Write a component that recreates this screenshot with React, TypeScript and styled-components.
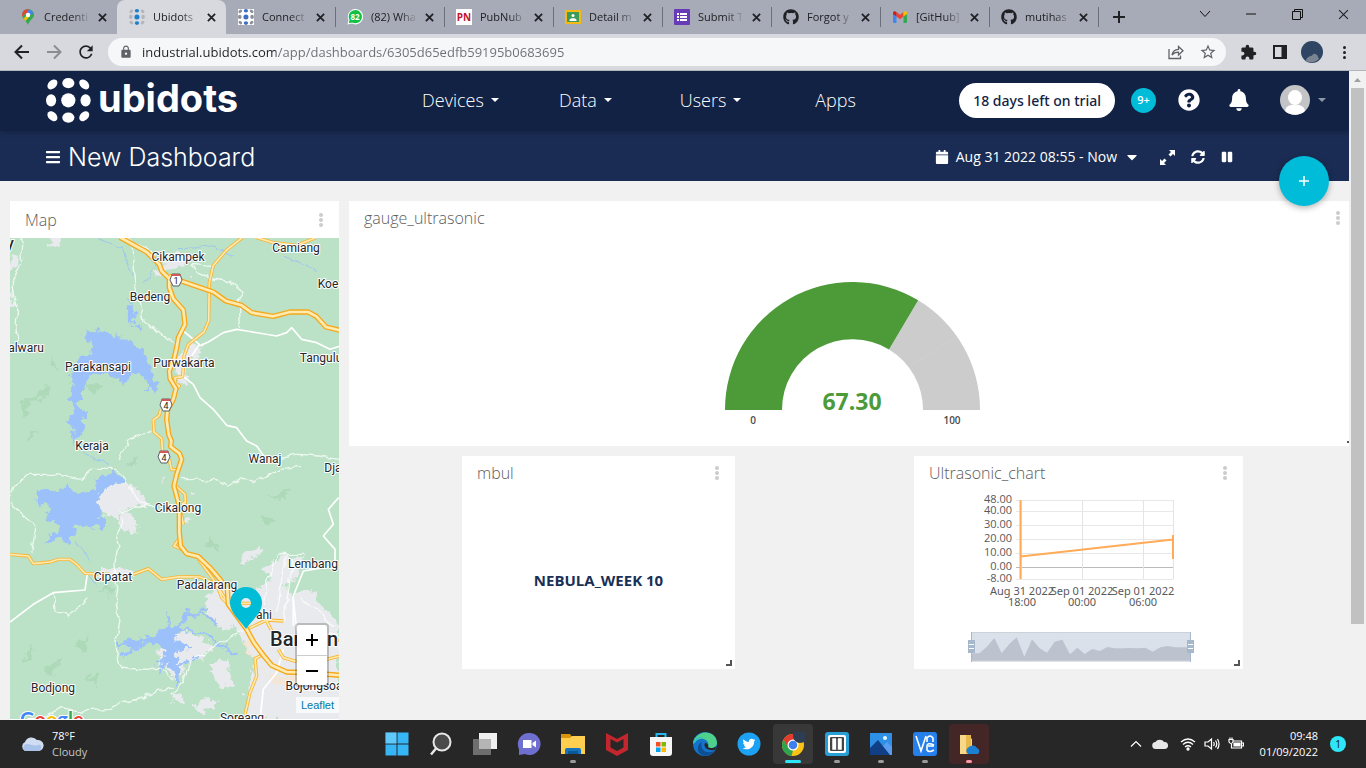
import React from "react";
import styled, { createGlobalStyle } from "styled-components";
import {
  FaBars, FaBell, FaCalendar, FaCaretDown, FaGithub, FaPause,
  FaQuestionCircle, FaSyncAlt, FaTwitter,
} from "react-icons/fa";
import { MdExtension, MdLock, MdRefresh, MdStarOutline } from "react-icons/md";

const sans = `"Open Sans", "Noto Sans", sans-serif`;

const GlobalStyle = createGlobalStyle`
  * { box-sizing: border-box; }
  body { margin: 0; font-family: ${sans}; }
  button { font: inherit; color: inherit; background: none; border: 0; padding: 0; cursor: pointer; }
  svg { display: block; flex: none; }
`;

const Shell = styled.div`
  display: flex;
  flex-direction: column;
  height: 100vh;
  overflow: hidden;
`;

/* ---------- browser ---------- */

const TabStrip = styled.div`
  display: flex;
  height: 34px;
  flex: none;
  padding-left: 8px;
  background: #a7abb7;
  color: #202124;
`;

const Tab = styled.div<{ $active?: boolean; $line?: boolean }>`
  position: relative;
  display: flex;
  align-items: center;
  gap: 8px;
  flex: 0 1 109px;
  min-width: 0;
  padding: 0 9px 0 12px;
  border-radius: 8px 8px 0 0;
  background: ${(p) => (p.$active ? "#d8d9de" : "transparent")};
  &::after {
    content: "";
    position: absolute;
    right: -1px;
    top: 7px;
    width: 1px;
    height: 20px;
    background: ${(p) => (p.$line ? "#6b6f79" : "transparent")};
  }
`;

const TabTitle = styled.button`
  flex: 1 1 0;
  min-width: 0;
  white-space: nowrap;
  text-align: left;
  font-size: 11px;
  line-height: 16px;
  mask-image: linear-gradient(90deg, #000 65%, rgba(0, 0, 0, 0.15));
`;

const FaviconTile = styled.span`
  background: #fff;
`;

const IconButton = styled.button<{ $w: number; $h?: number }>`
  display: flex;
  align-items: center;
  justify-content: center;
  flex: none;
  width: ${(p) => p.$w}px;
  height: ${(p) => p.$h ?? 28}px;
`;

const WindowControls = styled.div`
  display: flex;
  margin-left: auto;
`;

const Toolbar = styled.div`
  display: flex;
  align-items: center;
  flex: none;
  height: 37px;
  padding: 0 6px;
  background: #d8d9de;
  border-bottom: 1px solid #b3b6b8;
  color: #202124;
`;

const AddressBar = styled.div`
  display: flex;
  align-items: center;
  flex: 1;
  height: 28px;
  margin: 0 6px 0 6px;
  padding: 0 2px 0 11px;
  border-radius: 14px;
  background: #f5f7f9;
  color: #5f6368;
`;

const AddressInput = styled.input`
  flex: 1;
  min-width: 0;
  margin-left: 9px;
  padding: 0;
  border: 0;
  outline: 0;
  font-family: ${sans};
  font-size: 13px;
  line-height: 20px;
  color: transparent;
  background: linear-gradient(90deg, #202124 134px, #6b6e74 134px);
  background-clip: text;
  -webkit-background-clip: text;
`;

const Viewport = styled.div`
  display: flex;
  flex: 1;
  min-height: 0;
`;

const ScrollTrack = styled.div`
  display: flex;
  flex-direction: column;
  align-items: center;
  flex: none;
  width: 17px;
  background: #f1f1f1;
`;

const ScrollThumb = styled.div`
  width: 13px;
  height: calc(100% - 113px);
  background: #c1c1c1;
`;

/* ---------- Ubidots page ---------- */

const Page = styled.div`
  position: relative;
  flex: 1;
  min-width: 0;
  overflow: hidden;
  background: #f1f1f1;
`;

const Header = styled.header`
  position: relative;
  display: grid;
  grid-template-columns: minmax(200px, 352fr) 500px minmax(360px, 428fr);
  align-items: center;
  height: 60px;
  padding: 0 23px 2px 46px;
  background: #122244;
  color: #fff;
  box-shadow: 0 1px 5px rgba(0, 0, 0, 0.25);
`;

const Brand = styled.a`
  display: flex;
  align-items: flex-start;
  gap: 7px;
  color: #fff;
  text-decoration: none;
  font-size: 38px;
  line-height: 40px;
  font-weight: 700;
  font-family: Inter, ${sans};
`;

const Nav = styled.nav`
  display: grid;
  grid-template-columns: repeat(4, 1fr);
  justify-items: center;
`;

const NavItem = styled.button`
  display: flex;
  align-items: center;
  gap: 7px;
  font-size: 18px;
  line-height: 24px;
  font-weight: 300;
`;

const Account = styled.div`
  display: flex;
  align-items: center;
  justify-content: flex-end;
`;

const TrialButton = styled.button`
  height: 35px;
  padding: 0 14px;
  margin-right: 16px;
  border-radius: 18px;
  background: #fff;
  color: #122244;
  font-family: "Noto Sans", ${sans};
  font-size: 14px;
  font-weight: 500;
  white-space: nowrap;
`;

const CountBadge = styled.span`
  width: 25px;
  height: 25px;
  margin-right: 22px;
  border-radius: 50%;
  background: #00bcd9;
  text-align: center;
  font-size: 11px;
  line-height: 24px;
  font-weight: 600;
`;

const Alerts = styled.div`
  display: flex;
  align-items: center;
  gap: 28px;
  margin-right: 30px;
`;

const UserMenu = styled.button`
  display: flex;
  align-items: center;
  gap: 8px;
  color: #8f98aa;
`;

const SubHeader = styled.div`
  display: flex;
  align-items: center;
  justify-content: space-between;
  height: 50px;
  padding: 2px 116px 0 45px;
  background: #1a2c53;
  color: #fff;
`;

const Heading = styled.div`
  display: flex;
  align-items: center;
  gap: 7px;
`;

const PageTitle = styled.h1`
  margin: 0;
  font-family: Inter, ${sans};
  font-size: 25px;
  line-height: 32px;
  font-weight: 300;
`;

const TimeControls = styled.div`
  display: flex;
  align-items: center;
  gap: 16px;
`;

const RangeButton = styled.button`
  display: flex;
  align-items: center;
  gap: 7px;
  margin-right: 4px;
  font-size: 14px;
  line-height: 20px;
  font-weight: 500;
`;

const AddWidget = styled.button`
  position: absolute;
  right: 20px;
  top: 85px;
  z-index: 2;
  display: flex;
  align-items: center;
  justify-content: center;
  width: 50px;
  height: 50px;
  border-radius: 50%;
  background: #00bcd9;
  box-shadow: 0 2px 6px rgba(0, 0, 0, 0.3);
`;

/* The board is as wide as the window, so its last column runs under the scrollbar. */
const Board = styled.main`
  display: grid;
  width: calc(100% + 17px);
  grid-template-columns: repeat(12, minmax(0, 1fr));
  grid-template-rows: 245px 213px 50px;
  gap: 10px;
  padding: 20px 10px;
`;

const Widget = styled.section<{ $col: string; $row: string; $min?: number }>`
  position: relative;
  display: flex;
  flex-direction: column;
  grid-column: ${(p) => p.$col};
  grid-row: ${(p) => p.$row};
  min-width: ${(p) => p.$min ?? 0}px;
  background: #fff;
`;

const WidgetHead = styled.div<{ $tall?: boolean }>`
  display: flex;
  align-items: center;
  justify-content: space-between;
  flex: none;
  height: ${(p) => (p.$tall ? 37 : 34)}px;
  padding: 0 15px;
`;

const WidgetTitle = styled.h2`
  margin: 0;
  font-size: 16px;
  line-height: 22px;
  font-weight: 300;
  color: #5c5c5c;
`;

const WidgetBody = styled.div<{ $end?: boolean }>`
  display: flex;
  align-items: ${(p) => (p.$end ? "flex-end" : "center")};
  justify-content: center;
  flex: 1;
  min-height: 0;
`;

const ResizeCorner = styled.span`
  position: absolute;
  right: 3px;
  bottom: 3px;
  width: 6px;
  height: 6px;
  border: solid #555;
  border-width: 0 2px 2px 0;
`;

const Statement = styled.p`
  margin: 0;
  font-size: 15px;
  line-height: 20px;
  font-weight: 700;
  color: #1a3055;
`;

const MapBody = styled.div`
  position: relative;
  flex: none;
  height: 481px;
  overflow: hidden;
  background: #bbe2c6;
`;

const MapCorner = styled.div`
  position: absolute;
  right: 0;
  bottom: 6px;
  display: flex;
  flex-direction: column;
  align-items: flex-end;
  gap: 10px;
`;

const ZoomBox = styled.div`
  display: flex;
  flex-direction: column;
  margin-right: 10px;
  border: 2px solid rgba(0, 0, 0, 0.2);
  border-radius: 4px;
  background: #fff;
  background-clip: padding-box;
`;

const ZoomButton = styled.button`
  display: flex;
  align-items: center;
  justify-content: center;
  width: 30px;
  height: 30px;
  & + & { border-top: 1px solid #ccc; }
`;

const Attribution = styled.a`
  padding: 0 5px;
  background: rgba(255, 255, 255, 0.7);
  color: #0078a8;
  font-family: "Liberation Sans", sans-serif;
  font-size: 11px;
  line-height: 16px;
  text-decoration: none;
`;

/* ---------- taskbar ---------- */

const Taskbar = styled.footer`
  display: grid;
  grid-template-columns: 1fr auto 1fr;
  align-items: center;
  flex: none;
  height: 48px;
  padding: 0 20px;
  background: #272727;
  color: #fff;
  font-size: 11px;
  line-height: 16px;
`;

const Weather = styled.button`
  display: flex;
  align-items: center;
  gap: 8px;
  text-align: left;
`;

const Muted = styled.div`
  color: #c4c6c4;
`;

const Apps = styled.div`
  display: flex;
  gap: 4px;
`;

const AppButton = styled.button<{ $bg?: string; $mark?: string; $wide?: boolean }>`
  position: relative;
  display: flex;
  align-items: center;
  justify-content: center;
  width: 40px;
  height: 40px;
  border-radius: 4px;
  background: ${(p) => p.$bg ?? "transparent"};
  &::after {
    content: "";
    position: absolute;
    bottom: 1px;
    width: ${(p) => (p.$wide ? 16 : 6)}px;
    height: 3px;
    border-radius: 2px;
    background: ${(p) => p.$mark ?? "transparent"};
  }
`;

const Tray = styled.div`
  display: flex;
  align-items: center;
  justify-content: flex-end;
  gap: 8px;
`;

const Overflow = styled.div`
  display: flex;
  gap: 8px;
  margin-right: 4px;
`;

const Clock = styled.div`
  margin-left: 8px;
  margin-right: 4px;
  text-align: right;
`;

const NoticeCount = styled.span`
  width: 16px;
  height: 16px;
  border-radius: 50%;
  background: #2ee6f5;
  color: #111;
  text-align: center;
  font-size: 10px;
  line-height: 16px;
`;

/* ---------- drawings ---------- */

const Cross = ({ size = 9, w = 2 }: { size?: number; w?: number }) => (
  <svg width={size} height={size} viewBox="0 0 10 10" stroke="currentColor" strokeWidth={w}>
    <path d="M1 1 9 9M9 1 1 9" />
  </svg>
);

const DotsLogo = ({ size, a = "#fff", b = "#fff" }: { size: number; a?: string; b?: string }) => (
  <svg width={size} height={size} viewBox="0 0 133 133" fill={b}>
    <circle cx="66" cy="66" r="21" fill={a} />
    <ellipse cx="66" cy="15" rx="18" ry="15" fill={a} />
    <ellipse cx="66" cy="117" rx="18" ry="15" fill={a} />
    <ellipse cx="15" cy="66" rx="15" ry="18" />
    <ellipse cx="117" cy="66" rx="15" ry="18" />
    <ellipse cx="19" cy="19" rx="17" ry="12" transform="rotate(-45 19 19)" />
    <ellipse cx="113" cy="19" rx="17" ry="12" transform="rotate(45 113 19)" />
    <ellipse cx="19" cy="113" rx="17" ry="12" transform="rotate(45 19 113)" />
    <ellipse cx="113" cy="113" rx="17" ry="12" transform="rotate(-45 113 113)" />
  </svg>
);

const MapsIcon = () => (
  <svg width="16" height="16" viewBox="0 0 16 16">
    <path d="M2 6A6 6 0 0 1 14 6C14 9 9.500 11 8 16 6.500 12 2 9 2 6Z" fill="#34a853" />
    <path d="M2.200 7.500 10 1C5-1.500 1.500 3 2.200 7.500Z" fill="#ea4335" />
    <path d="M3.500 9.500 11 2.500 12 4 5.500 12Z" fill="#fbbc04" />
    <path d="M9 0.500A6 6 0 0 1 13.500 4L10 6 7 3Z" fill="#4285f4" />
    <circle cx="8" cy="6" r="2.200" fill="#fff" />
  </svg>
);

const WhatsIcon = () => (
  <svg width="16" height="16" viewBox="0 0 16 16">
    <path d="M.5 15.500 1.500 11A7.700 7.700 0 1 1 5 14.600Z" fill="#fff" />
    <path d="M1.800 14.300 2.600 11A6.600 6.600 0 1 1 5.200 13.500Z" fill="#12c143" />
    <text x="8" y="11" fontSize="8" fontWeight="700" fill="#fff" textAnchor="middle">82</text>
  </svg>
);

const PubNubIcon = () => (
  <svg width="16" height="16" viewBox="0 0 16 16">
    <path fill="#fff" d="M0 0H16V16H0Z" />
    <text x="8" y="12" fontSize="10" fontWeight="700" fill="#c3112d" textAnchor="middle">PN</text>
  </svg>
);

const ClassroomIcon = () => (
  <svg width="16" height="16" viewBox="0 0 16 16">
    <path fill="#f5ba15" d="M0 1H16V15H0Z" />
    <path fill="#3c9a5a" d="M2 3H14V13H2Z" />
    <circle cx="8" cy="6.500" r="1.500" fill="#fff" />
    <path d="M4.500 11C4.500 8.500 11.500 8.500 11.500 11V12H4.500Z" fill="#fff" />
  </svg>
);

const FormsIcon = () => (
  <svg width="16" height="16" viewBox="0 0 16 16">
    <rect width="16" height="16" rx="1" fill="#673ab7" />
    <path stroke="#fff" strokeWidth="2" d="M3 5H5M6 5H13M3 8H5M6 8H13M3 11H5M6 11H13" />
  </svg>
);

const GmailIcon = () => (
  <svg width="16" height="16" viewBox="0 0 16 16">
    <path fill="#4285f4" d="M1 4 4.500 6.500V14H2A1 1 0 0 1 1 13Z" />
    <path fill="#34a853" d="M15 4 11.500 6.500V14H14A1 1 0 0 0 15 13Z" />
    <path fill="#ea4335" d="M4.500 3 8 5.800 11.500 3V7.500L8 10.200 4.500 7.500Z" />
    <path fill="#c5221f" d="M1 4C1 2 3 1.700 4.500 3V7.500L1 5Z" />
    <path fill="#fbbc04" d="M15 4C15 2 13 1.700 11.500 3V7.500L15 5Z" />
  </svg>
);

const Arrow = ({ back }: { back?: boolean }) => (
  <svg width="16" height="16" viewBox="0 0 16 16" fill="none" stroke={back ? "#202124" : "#8b8d93"} strokeWidth="2">
    <path d={back ? "M15 8H2.500M8 1.500 1.500 8 8 14.500" : "M1 8H13.500M8 1.500 14.500 8 8 14.500"} />
  </svg>
);

const ShareIcon = () => (
  <svg width="16" height="16" viewBox="0 0 16 16" fill="none" stroke="#5f6368" strokeWidth="1.300">
    <path d="M1 5V14.500H12.500V11.500M4 11C4.500 7.500 7 5.500 10.500 5.300V2.500L15 6.700 10.500 11V8.200C8 8.200 5.500 9 4 11Z" />
  </svg>
);

const AvatarPhoto = () => (
  <svg width="22" height="22" viewBox="0 0 22 22">
    <circle cx="11" cy="11" r="11" fill="#2f4563" />
    <path d="M5 20C5 17 8 16 9 15 11 16 12 12 14 13 17 13 17 17 18 18A11 11 0 0 1 5 20Z" fill="#7b8591" />
  </svg>
);

const DotColumn = ({ color, r = 2, step = 5 }: { color: string; r?: number; step?: number }) => (
  <svg width={r * 2 + 2} height={step * 2 + r * 2} fill={color}>
    {[0, 1, 2].map((i) => <circle key={i} cx={r + 1} cy={r + i * step} r={r} />)}
  </svg>
);

const Caret = () => (
  <svg width="8" height="4" viewBox="0 0 8 4" fill="currentColor"><path d="M0 0H8L4 4Z" /></svg>
);

const ExpandIcon = () => (
  <svg width="15" height="15" viewBox="0 0 15 15" fill="#fff">
    <path d="M9 0H15V6L13 4 10.500 6.500 8.500 4.500 11 2ZM6 15H0V9L2 11 4.500 8.500 6.500 10.500 4 13Z" />
  </svg>
);

const UserPhoto = () => (
  <svg width="30" height="30" viewBox="0 0 30 30">
    <circle cx="15" cy="15" r="15" fill="#c3c4c6" />
    <ellipse cx="15" cy="12.500" rx="7" ry="7.500" fill="#fff" />
    <path d="M5 26C6 20 11 20 15 20 19 20 24 20 25 26A15 15 0 0 1 5 26Z" fill="#fff" />
  </svg>
);

const highway =
  "M360 124 440 168 478 205 485 225 508 248 508 275 520 308 550 342 555 385 535 425 530 455 522 490 508 525 510 548 528 578 520 610 503 640 500 670 506 715 514 735 512 752 538 772 545 790 530 835 522 870 538 930 538 1010 542 1050 560 1073 595 1082 630 1115 660 1150 682 1180 685 1225 740 1300 762 1340 790 1378 815 1408 860 1428 920 1430 1020 1438";
const highwayEast = "M508 240 528 250 640 288 678 315 725 328 755 350 820 361 870 348 925 348 950 362 978 393 1020 403";
const trunks = [
  "M728 124 680 162 640 208 628 260 626 375 612 408 565 445 552 480 548 542 525 545 525 562 538 570 528 582",
  "M768 124 820 140 890 148 945 126",
  "M482 640 478 658 460 672 462 708 485 728 488 770M508 790 514 820 528 822",
  "M528 870 555 895 556 920 540 925M540 935 550 985M535 1030 522 1050 545 1060",
  "M28 1075 85 1080 100 1103 150 1098 175 1090 210 1090 230 1105 255 1132 330 1135M400 1135 445 1118 485 1150 540 1142 600 1143 650 1165 665 1205 685 1225",
  "M595 1090 640 1150 680 1215 690 1170",
  "M722 1222H755M740 1300 800 1272 850 1275M800 1275 818 1310M835 1360 850 1385 890 1397M960 1395 1020 1380",
  "M795 1372 765 1388 770 1440 750 1490 735 1555",
];
const byways = [
  "M375 126 455 165 480 180M575 205 640 212M575 205 605 240 690 255 715 278 730 290 715 315 718 398",
  "M400 150 400 180 410 290 430 378 480 410 530 455",
  "M355 792 380 735 430 715 460 708M820 792 900 775 960 780 1020 790",
  "M66 126 62 205 35 250 50 330 45 400 52 440",
  "M160 1190 165 1245 210 1260 262 1205",
  "M30 900 40 875 75 835 160 835 240 850 275 820 350 820 375 850",
  "M30 920 70 960 108 990 95 1070M375 850 420 920 470 935M435 930 360 945 365 980 345 1100 350 1180 345 1220 360 1275 345 1350 360 1410 440 1420 480 1410 520 1450",
  "M120 1570 180 1535 240 1545 330 1540 375 1515 440 1500 520 1470",
  "M540 845 580 845 650 855 680 870 730 850 760 860 840 820 900 815",
  "M835 1075 800 1160 790 1230M835 1075 915 1075M860 1080 830 1250M880 1090 850 1280M620 1365 680 1330 740 1300",
  "M520 1490 550 1460 570 1400 620 1365M900 1300 960 1320 1020 1310M900 1200 960 1250 1000 1290",
];
const mainStreets = [
  "M598 450 625 438 670 410 710 400 740 405 830 420 860 410 875 395 905 430 950 440 990 460 1020 450",
  "M550 405 598 445 575 480M548 540 580 565 600 605 640 640 680 688 710 695 740 735 770 750 800 792",
  "M30 1278 100 1225 160 1190 255 1182 262 1134",
  "M1016 905 985 940 1000 985 970 1020 1005 1060 1005 1110 910 1125 880 1200 880 1290",
  "M780 1570 790 1480 830 1430 850 1360M880 1210 890 1300 910 1340",
];
const lakes = [
  "M248 412 285 400 330 415 372 425 400 445 432 463 438 500 462 525 460 550 475 575 465 590 445 582 438 555 415 530 390 535 375 570 350 545 300 530 262 540 248 600 232 625 262 650 245 665 260 700 215 740 222 700 200 675 220 640 210 600 218 545 205 528 228 500 235 470 268 475 280 440 250 425Z",
  "M385 310 395 330 405 360 400 385 385 350ZM400 390 420 385 430 410Z",
  "M300 830 345 828 378 852 325 870 295 905 305 935 298 960 325 975 310 1000 270 990 228 985 225 1015 208 1025 205 1045 185 1020 140 1045 132 1045 150 1020 178 1000 160 975 135 970 145 930 120 925 102 893 135 875 180 890 205 862 225 890 280 885Z",
  "M375 1340 420 1325 465 1320 490 1298 520 1292 545 1305 520 1330 555 1345 530 1375 540 1420 530 1480 515 1420 482 1395 495 1365 465 1345 430 1340 395 1360Z",
];
const inlets =
  "M350 1352 380 1335 430 1330M365 1385 400 1360 440 1345M490 1310 510 1280 500 1250M530 1298 580 1308 625 1320 655 1345 710 1375M530 1420 560 1395 600 1380M470 1400 500 1380 480 1430M520 1350 575 1350M550 1270 565 1240M530 1300 550 1270 600 1250 625 1230M600 1255 635 1265 650 1290";
const creeks =
  "M225 1035 262 1075 272 1100M270 1140 290 1180M365 150 385 210 400 240M430 260 475 190M290 126 365 155M700 180 640 150 540 155M850 180 900 200 950 220M250 765 330 810";
const towns = [
  "M160 126H185L175 155 145 145Z", "M28 180 60 175 62 205 30 225ZM30 270 45 330 30 340Z",
  "M485 175 560 165 570 195 540 215 490 225ZM455 225 480 220 490 240 470 245ZM565 230 580 232 570 242Z",
  "M575 440 605 450 600 480 570 490 555 540 565 565 535 560 525 500 540 470Z",
  "M330 850 385 860 435 900 435 930 365 940 350 965 310 955 295 905Z",
  "M370 940 400 960 418 1005 375 1010 355 985Z", "M300 1120 400 1120 400 1140 300 1140Z",
  "M570 890 595 895 575 905ZM550 960 570 970 550 985ZM480 845 490 845 485 870Z",
  "M720 1090 745 1065 780 1050 785 1070 740 1100Z",
  "M610 1200 660 1180 700 1175 740 1190 790 1170 830 1150 880 1200 930 1180 960 1220 1020 1290V1575H750L735 1500 765 1400 730 1330 700 1290 660 1300 640 1280 620 1240Z",
  "M470 1320 560 1310 640 1350 600 1390 560 1390 545 1440 520 1450 480 1400ZM625 1410 680 1390 700 1470 660 1480 640 1440ZM515 1490 545 1500 550 1520 520 1515ZM580 1530 635 1500 650 1530 600 1550Z",
  "M790 1120 850 1070 880 1090 910 1075 900 1150 830 1170Z",
];
const hills = [
  "M100 610 150 560 140 600ZM60 620 110 600 70 660ZM250 560 280 600 300 570ZM330 510 350 540 345 570ZM150 500 170 530 160 480Z",
  "M800 900 870 880 850 910ZM780 960 830 970 800 990ZM60 1400 100 1340 90 1390ZM130 1420 200 1380 150 1440ZM220 1350 270 1320 250 1370Z",
  "M300 1180 330 1160 340 1200ZM250 1450 300 1430 290 1470ZM380 800 420 780 400 815ZM80 740 120 700 90 710ZM610 1050 640 1030 650 1060Z",
];

const places: [string, number, number][] = [
  ["Cikampek", 168, 23], ["Camiang", 286, 14], ["Koe", 318, 50], ["Bedeng", 140, 63],
  ["alwaru", 16, 114], ["Parakansapi", 88, 133], ["Purwakarta", 174, 129], ["Tangulu", 311, 124],
  ["Keraja", 82, 212], ["Wanaj", 255, 225], ["Dja", 323, 234], ["Cikalong", 168, 274],
  ["Lembang", 303, 330], ["Cipatat", 103, 343], ["Padalarang", 197, 351], ["ahi", 254, 381],
  ["Bodjong", 43, 454], ["Bojongsoa", 304, 452], ["Soreang", 232, 484],
];

const shields: [string, number, number][] = [["1", 166, 42], ["4", 156, 167], ["4", 154, 219]];

const MapDrawing = () => (
  <svg width="100%" height="481" viewBox="0 0 329 481" preserveAspectRatio="xMidYMin slice">
    <filter id="coast" x="-10%" y="-10%" width="120%" height="120%" colorInterpolationFilters="sRGB">
      <feTurbulence type="fractalNoise" baseFrequency="0.045" numOctaves="3" seed="4" result="n" />
      <feDisplacementMap in="SourceGraphic" in2="n" scale="38" xChannelSelector="R" yChannelSelector="G" />
    </filter>
    <filter id="wander" x="-10%" y="-10%" width="120%" height="120%" colorInterpolationFilters="sRGB">
      <feTurbulence type="fractalNoise" baseFrequency="0.03" numOctaves="2" seed="9" result="n" />
      <feDisplacementMap in="SourceGraphic" in2="n" scale="24" xChannelSelector="R" yChannelSelector="G" />
    </filter>
    <g transform="translate(-10 -42) scale(.33333)" fill="none" strokeLinejoin="round">
      <g filter="url(#coast)">
        {hills.map((d) => <path key={d} d={d} fill="#add9b9" />)}
        {towns.map((d) => <path key={d} d={d} fill="#e8eaed" />)}
        <path d="M740 1320 755 1370 800 1440 890 1440 890 1470 810 1455 740 1370Z" fill="#f3e6d6" />
      </g>
      <g filter="url(#coast)">
        {lakes.map((d) => <path key={d} d={d} fill="#9cc0f9" />)}
        <path d={inlets} stroke="#9cc0f9" strokeWidth="8" />
      </g>
      <g filter="url(#wander)">
        <path d={creeks} stroke="#9fc6ee" strokeWidth="3" />
        {byways.map((d) => <path key={d} d={d} stroke="#fff" strokeOpacity=".75" strokeWidth="4" />)}
      </g>
      {mainStreets.map((d) => <path key={d} d={d} stroke="#fff" strokeWidth="5" />)}
      {trunks.map((d) => <path key={d} d={d} stroke="#f5b533" strokeWidth="10" />)}
      {trunks.map((d) => <path key={d} d={d} stroke="#ffe9b0" strokeWidth="5" />)}
      <path d={highway + highwayEast} stroke="#f5a81c" strokeWidth="16" />
      <path d={highway + highwayEast} stroke="#ffeab0" strokeWidth="8" />
    </g>
    {shields.map(([n, x, y]) => (
      <g key={n + y}>
        <path d={`M${x - 4} ${y - 6}H${x + 4}L${x + 6} ${y}L${x + 3} ${y + 6}H${x - 3}L${x - 6} ${y}Z`} fill="#fff" stroke="#5b6066" />
        <path d={`M${x - 4} ${y - 6}H${x + 4}L${x + 5} ${y - 4}H${x - 5}Z`} fill="#d0595a" />
        <text x={x} y={y + 4} fontSize="9" fontFamily="Roboto" textAnchor="middle" fill="#222">{n}</text>
      </g>
    ))}
    <g fontFamily="Roboto, sans-serif" fontSize="12" fill="#24262a" stroke="#fff" strokeWidth="2" strokeLinejoin="round" paintOrder="stroke" textAnchor="middle">
      {places.map(([name, x, y]) => <text key={name} x={x} y={y}>{name}</text>)}
      <text x="260" y="408" fontSize="20" fontWeight="500" textAnchor="start">Bandung</text>
      <text x="-4" y="11" fontSize="16" fontWeight="500" textAnchor="start">y</text>
    </g>
    <g fontFamily="Lato, sans-serif" fontSize="20" fontWeight="700" stroke="#fff" strokeWidth="2" paintOrder="stroke">
      <text x="10" y="489"><tspan fill="#4285f4">G</tspan><tspan fill="#ea4335">o</tspan><tspan fill="#fbbc04">o</tspan><tspan fill="#4285f4">g</tspan><tspan fill="#34a853">l</tspan><tspan fill="#ea4335">e</tspan></text>
    </g>
    <path fillRule="evenodd" fill="#00bcd6" d="M236 391C230 382 220 375 220 365A16 16 0 0 1 252 365C252 375 242 382 236 391ZM236 360A5 5 0 1 0 236 370 5 5 0 0 0 236 360Z" />
  </svg>
);

const Gauge = () => (
  <svg width="257" height="164" viewBox="0 0 257 164" fontFamily="Open Sans">
    <path d="M194.200 18.300A127.500 127.500 0 0 1 256 128H199A70.500 70.500 0 0 0 165 67.400Z" fill="#ccc" />
    <path d="M1 128A127.500 127.500 0 0 1 194.200 18.300L165 67.400A70.500 70.500 0 0 0 58 128Z" fill="#4c9a38" />
    <path d="M188 83 232 55" stroke="#d3d3d3" strokeWidth=".6" />
    <text x="128" y="128" fontSize="23" fontWeight="700" fill="#4c9a38" textAnchor="middle">67.30</text>
    <g fontSize="10" fontWeight="600" fill="#4a4a4a" textAnchor="middle">
      <text x="29" y="142">0</text>
      <text x="228" y="142">100</text>
    </g>
  </svg>
);

const yTicks: [string, number][] = [["48.00", 10], ["40.00", 21], ["30.00", 35], ["20.00", 49], ["10.00", 63], ["0.00", 77], ["-8.00", 89]];
const xTicks: [string, string, number][] = [["Aug 31 2022", "18:00", 108], ["Sep 01 2022", "00:00", 168], ["Sep 01 2022", "06:00", 229]];

const Chart = () => (
  <svg width="329" height="179" viewBox="0 0 329 179" fontFamily="Open Sans" fontSize="11" fill="#58595b">
    {yTicks.map(([label, y]) => (
      <g key={label}>
        <path d={`M102 ${y + 0.5}H259`} stroke={label === "0.00" ? "#bbb" : "#e8e8e8"} />
        <text x="98" y={y + 3} textAnchor="end">{label}</text>
      </g>
    ))}
    <path d="M107.500 10V89M168.500 10V89M229.500 10V89M259.500 10V89" stroke="#e4e4e4" />
    {xTicks.map(([day, hour, x]) => (
      <g key={x} textAnchor="middle" fontFamily="Noto Sans">
        <text x={x} y="105">{day}</text>
        <text x={x} y="116">{hour}</text>
      </g>
    ))}
    <path d="M106.500 10V89M106.500 66.500 259 49.500M259 45V69" stroke="#ffab57" strokeWidth="2" fill="none" />
    <path d="M57 142H277V171H57Z" fill="#dae1eb" />
    <g transform="translate(-14 -50) scale(.33333)">
      <path fill="#bcc3ce" d="M215 640 238 640 260 621 283 594 305 640 328 612 350 592 373 650 396 598 419 625 441 638 464 605 487 599 510 643 532 623 554 642 577 627 600 633 622 621 645 625 668 625 690 624 714 625 736 623 758 635 781 622 803 618 826 622 872 622V664H215Z" />
    </g>
    <path d="M57 142.500H277M57 171H277" stroke="#cdd2d9" />
    <path d="M57.500 142V172M276.500 142V172" stroke="#a7b7cc" />
    <path d="M54 150H61V163H54ZM273 150H280V163H273Z" fill="#a7b7cc" />
    <path d="M55 154.500H60M55 158.500H60M274 154.500H279M274 158.500H279" stroke="#fff" />
  </svg>
);

/* ---------- taskbar icons ---------- */

const I = ({ children }: { children: React.ReactNode }) => (
  <svg width="24" height="24" viewBox="0 0 24 24">{children}</svg>
);

const StartIcon = () => <I><path fill="#37b6f6" d="M.5.5H11.500V11.500H.5ZM12.500.5H23.500V11.500H12.500ZM.5 12.500H11.500V23.500H.5ZM12.500 12.500H23.500V23.500H12.500Z" /><path fill="#8adcff" opacity=".5" d="M.5.5H11.500V11.500H.5Z" /></I>;
const SearchIcon = () => <I><circle cx="13" cy="10" r="8.500" fill="#4a4a4a" stroke="#e8e8e8" strokeWidth="2" /><path d="M7 16.500 2 22.500" stroke="#e8e8e8" strokeWidth="2.500" /></I>;
const TaskViewIcon = () => <I><path fill="#f1f1f1" d="M6 1H24V17H6Z" /><path fill="#777" fillOpacity=".9" d="M0 7H18V23H0Z" /><path fill="#b5b5b5" d="M6 7H18V17H6Z" /></I>;
const ChatIcon = () => <I><path fill="#6f6fd0" d="M12 1A11 11 0 1 1 8 22L2 23V17A11 11 0 0 1 12 1Z" /><path fill="#fff" d="M6 8H14.500V16H6ZM15.500 11 19 8.500V15.500L15.500 13Z" /></I>;
const FolderIcon = () => <I><path fill="#d9960a" d="M0 2H9L11 5V9H0Z" /><path fill="#ffd050" d="M0 6H9L11 4H24V22H0Z" /><path fill="#1673bd" d="M4 22V18Q4 16 6 16H18Q20 16 20 18V22Z" /><path fill="#0b5796" d="M7 19H17V22H7Z" /></I>;
const McAfeeIcon = () => <I><path fill="#c4262e" d="M1 1 12 7 23 1V18L12 24 1 18ZM5.500 7V15.500L12 19 18.500 15.500V7L12 10.500Z" fillRule="evenodd" /></I>;
const StoreIcon = () => <I><path d="M7.500 6V2H16.500V6" stroke="#2bb5ec" strokeWidth="2" fill="none" /><path fill="#f6f6f6" d="M1 5H23V21Q23 24 20 24H4Q1 24 1 21Z" /><path fill="#f25022" d="M7 10H11.500V14.500H7Z" /><path fill="#7fba00" d="M12.500 10H17V14.500H12.500Z" /><path fill="#00a4ef" d="M7 15.500H11.500V20H7Z" /><path fill="#ffb900" d="M12.500 15.500H17V20H12.500Z" /></I>;
const EdgeIcon = () => <I><circle cx="12" cy="12" r="12" fill="#1573c9" /><path fill="#4fd18b" d="M2 6C8-3 24-1 24 11 24 16 17 17 15 15 17 10 12 6 7 7 4 8 2 9 0 12 0 9 1 7 2 6Z" /><path fill="#2bb6dd" d="M0 12C2 5 9 3 14 7 10 4 4 6 3 10Z" /><path fill="#0c4f94" d="M9 10C6 16 12 23 21 19 16 27 3 24 5 15 6 12 7 11 9 10Z" /><path fill="#272727" d="M12 11C10 15 14 19 22 18L24 14C21 17 16 16 15 15 16 13 14 11 12 11Z" /></I>;
const ChromeIcon = () => <I><circle cx="12" cy="13" r="11" fill="#fbc116" /><path fill="#e33b2e" d="M2.500 7.500A11 11 0 0 1 21.500 7.500H12L7 16Z" /><path fill="#2da44e" d="M2.500 7.500 7.500 16 12 18.500 10.500 24A11 11 0 0 1 2.500 7.500Z" /><circle cx="12" cy="13" r="5.500" fill="#fff" /><circle cx="12" cy="13" r="4.300" fill="#3e7fee" /><circle cx="19" cy="4" r="7" fill="#2c3d54" /></I>;
const BracketIcon = () => <I><rect width="24" height="24" rx="3" fill="#2a9fd6" /><rect x="3" y="3" width="18" height="18" rx="2" fill="#fff" /><rect x="5" y="5" width="14" height="14" rx="1" fill="#444" /><path d="M11 7H8V17H11V7M13 7H16V17H13V7" stroke="#fff" strokeWidth="1.500" fill="#fff" /><path d="M12 5V19" stroke="#444" strokeWidth="1.500" /></I>;
const PhotosIcon = () => <I><path fill="#2d8fe6" d="M1 1H23V23H1Z" /><path fill="#5a9df0" d="M12 16 18 10 23 15V23H12Z" /><path fill="#103f86" d="M1 16 9 8 21 23H1Z" /><circle cx="16" cy="6" r="2" fill="#eaf6ff" /></I>;
const VncIcon = () => <I><rect width="24" height="24" rx="3" fill="#2680eb" /><path d="M3 4 8 19 13 4M14 10V6Q17 2 20 6V10M21 13Q14 10 14 14V18Q16 21 21 18M15 14H21" stroke="#fff" strokeWidth="1.600" fill="none" /></I>;
const OneDriveFolder = () => <I><path fill="#f7d888" d="M3 3H10L15 7V22H3Z" /><path fill="#e7b94c" d="M9 3H14V20L9 22Z" /><path fill="#1b7fd4" d="M11 22A4 4 0 0 1 12 15 5 5 0 0 1 20 16 3.500 3.500 0 0 1 21 22Z" /></I>;
const TwitterIcon = () => <I><circle cx="12" cy="12" r="11.500" fill="#1da1f2" /><g transform="translate(5.500 5.500)" color="#fff"><FaTwitter size={13} /></g></I>;

const tabs: { title: string; icon: React.ReactNode; active?: boolean; line?: boolean }[] = [
  { title: "Credenti", icon: <MapsIcon /> },
  { title: "Ubidots", icon: <DotsLogo size={16} a="#1b7fcb" b="#b3b5ba" />, active: true },
  { title: "Connect", icon: <FaviconTile><DotsLogo size={16} a="#3c6fc4" b="#8d9097" /></FaviconTile>, line: true },
  { title: "(82) Wha", icon: <WhatsIcon />, line: true },
  { title: "PubNub", icon: <PubNubIcon />, line: true },
  { title: "Detail m", icon: <ClassroomIcon />, line: true },
  { title: "Submit T", icon: <FormsIcon />, line: true },
  { title: "Forgot y", icon: <FaGithub size={16} />, line: true },
  { title: "[GitHub]", icon: <GmailIcon />, line: true },
  { title: "mutihas", icon: <FaGithub size={16} />, line: true },
];

const taskApps: { name: string; icon: React.ReactNode; mark?: string; bg?: string; wide?: boolean }[] = [
  { name: "Start", icon: <StartIcon /> },
  { name: "Search", icon: <SearchIcon /> },
  { name: "Task view", icon: <TaskViewIcon /> },
  { name: "Chat", icon: <ChatIcon /> },
  { name: "File Explorer", icon: <FolderIcon />, mark: "#9b9b9b" },
  { name: "McAfee", icon: <McAfeeIcon /> },
  { name: "Store", icon: <StoreIcon /> },
  { name: "Edge", icon: <EdgeIcon /> },
  { name: "Twitter", icon: <TwitterIcon /> },
  { name: "Chrome", icon: <ChromeIcon />, mark: "#2ee6fa", bg: "#383838", wide: true },
  { name: "Brackets", icon: <BracketIcon />, mark: "#9b9b9b" },
  { name: "Photos", icon: <PhotosIcon />, mark: "#9b9b9b" },
  { name: "VNC Viewer", icon: <VncIcon />, mark: "#9b9b9b" },
  { name: "OneDrive folder", icon: <OneDriveFolder />, mark: "#ff99a4", bg: "#452626" },
];

const WidgetHeader = ({ title, tall }: { title: string; tall?: boolean }) => (
  <WidgetHead $tall={tall}>
    <WidgetTitle>{title}</WidgetTitle>
    <button aria-label={`${title} options`}><DotColumn color="#ccc" /></button>
  </WidgetHead>
);

export default function App() {
  return (
    <Shell>
      <GlobalStyle />
      <TabStrip>
        {tabs.map((t) => (
          <Tab key={t.title} $active={t.active} $line={t.line}>
            {t.icon}
            <TabTitle>{t.title}</TabTitle>
            <IconButton $w={12} aria-label="Close tab"><Cross /></IconButton>
          </Tab>
        ))}
        <IconButton $w={42} $h={34} aria-label="New tab">
          <svg width="12" height="12" stroke="currentColor" strokeWidth="2"><path d="M6 0V12M0 6H12" /></svg>
        </IconButton>
        <WindowControls>
          <IconButton $w={46} aria-label="Search tabs">
            <svg width="12" height="8" fill="none" stroke="#111"><path d="M1 1 6 6.500 11 1" /></svg>
          </IconButton>
          <IconButton $w={46} aria-label="Minimise">
            <svg width="10" height="2" stroke="#111"><path d="M0 1H10" /></svg>
          </IconButton>
          <IconButton $w={46} aria-label="Restore">
            <svg width="11" height="11" fill="none" stroke="#111"><path d="M.5 2.500H8.500V10.500H.5ZM2.500 2.500V.5H10.500V8.500H8.500" /></svg>
          </IconButton>
          <IconButton $w={46} aria-label="Close"><Cross size={11} w={1} /></IconButton>
        </WindowControls>
      </TabStrip>
      <Toolbar>
        <IconButton $w={32} aria-label="Back"><Arrow back /></IconButton>
        <IconButton $w={32} aria-label="Forward"><Arrow /></IconButton>
        <IconButton $w={32} aria-label="Reload"><MdRefresh size={20} /></IconButton>
        <AddressBar>
          <MdLock size={14} />
          <AddressInput aria-label="Address" defaultValue="industrial.ubidots.com/app/dashboards/6305d65edfb59195b0683695" />
          <IconButton $w={32} aria-label="Share"><ShareIcon /></IconButton>
          <IconButton $w={32} aria-label="Bookmark"><MdStarOutline size={18} /></IconButton>
        </AddressBar>
        <IconButton $w={32} aria-label="Extensions"><MdExtension size={17} /></IconButton>
        <IconButton $w={32} aria-label="Side panel">
          <svg width="14" height="14" fill="none" stroke="#202124" strokeWidth="2"><path d="M1 1H13V13H1Z" /><path d="M10.500 1V13" strokeWidth="4" /></svg>
        </IconButton>
        <IconButton $w={32} aria-label="Profile"><AvatarPhoto /></IconButton>
        <IconButton $w={32} aria-label="Menu"><DotColumn color="#202124" r={1.5} /></IconButton>
      </Toolbar>

      <Viewport>
        <Page>
          <Header>
            <Brand href="#"><DotsLogo size={45} />ubidots</Brand>
            <Nav>
              <NavItem>Devices <Caret /></NavItem>
              <NavItem>Data <Caret /></NavItem>
              <NavItem>Users <Caret /></NavItem>
              <NavItem>Apps</NavItem>
            </Nav>
            <Account>
              <TrialButton>18 days left on trial</TrialButton>
              <CountBadge>9+</CountBadge>
              <Alerts>
                <button aria-label="Help"><FaQuestionCircle size={22} /></button>
                <button aria-label="Notifications"><FaBell size={22} /></button>
              </Alerts>
              <UserMenu aria-label="Account"><UserPhoto /><Caret /></UserMenu>
            </Account>
          </Header>
          <SubHeader>
            <Heading>
              <button aria-label="Dashboards"><FaBars size={16} /></button>
              <PageTitle>New Dashboard</PageTitle>
            </Heading>
            <TimeControls>
              <RangeButton><FaCalendar size={14} />Aug 31 2022 08:55 - Now<FaCaretDown size={16} /></RangeButton>
              <button aria-label="Full screen"><ExpandIcon /></button>
              <button aria-label="Refresh"><FaSyncAlt size={14} /></button>
              <button aria-label="Pause"><FaPause size={12} /></button>
            </TimeControls>
          </SubHeader>
          <AddWidget aria-label="Add widget">
            <svg width="10" height="10" stroke="#fff" strokeWidth="1.500"><path d="M5 0V10M0 5H10" /></svg>
          </AddWidget>
          <Board>
            <Widget $col="1 / span 3" $row="1 / span 3">
              <WidgetHeader title="Map" tall />
              <MapBody>
                <MapDrawing />
                <MapCorner>
                  <ZoomBox>
                    <ZoomButton aria-label="Zoom in">
                      <svg width="12" height="12" stroke="#000" strokeWidth="2"><path d="M6 0V12M0 6H12" /></svg>
                    </ZoomButton>
                    <ZoomButton aria-label="Zoom out">
                      <svg width="12" height="2" stroke="#000" strokeWidth="2"><path d="M0 1H12" /></svg>
                    </ZoomButton>
                  </ZoomBox>
                  <Attribution href="#">Leaflet</Attribution>
                </MapCorner>
              </MapBody>
            </Widget>
            <Widget $col="4 / span 9" $row="1">
              <WidgetHeader title="gauge_ultrasonic" />
              <WidgetBody $end><Gauge /></WidgetBody>
              <ResizeCorner />
            </Widget>
            <Widget $col="5 / span 2" $row="2" $min={273}>
              <WidgetHeader title="mbul" />
              <WidgetBody><Statement>NEBULA_WEEK 10</Statement></WidgetBody>
              <ResizeCorner />
            </Widget>
            <Widget $col="9 / span 3" $row="2">
              <WidgetHeader title="Ultrasonic_chart" />
              <WidgetBody><Chart /></WidgetBody>
              <ResizeCorner />
            </Widget>
          </Board>
        </Page>
        <ScrollTrack>
          <IconButton $w={17} $h={17} aria-label="Scroll up">
            <svg width="7" height="4" fill="#a0a0a0"><path d="M0 4H7L3.500 0Z" /></svg>
          </IconButton>
          <ScrollThumb />
        </ScrollTrack>
      </Viewport>

      <Taskbar>
        <Weather>
          <svg width="24" height="16" viewBox="0 0 24 16">
            <path d="M5 15A5 5 0 0 1 5 6 7 7 0 0 1 17 4 5.500 5.500 0 0 1 19 15Z" fill="#cfdcf2" />
            <path d="M5 15A4 4 0 0 1 6 8C11 8 14 11 20 8.500A4 4 0 0 1 19 15Z" fill="#a9c2ea" />
          </svg>
          <div>78°F<Muted>Cloudy</Muted></div>
        </Weather>
        <Apps>
          {taskApps.map((a) => (
            <AppButton key={a.name} aria-label={a.name} $bg={a.bg} $mark={a.mark} $wide={a.wide}>{a.icon}</AppButton>
          ))}
        </Apps>
        <Tray>
          <Overflow>
            <svg width="16" height="16" fill="none" stroke="#fff" strokeWidth="1.200"><path d="M3 10.500 8 5.500 13 10.500" /></svg>
            <svg width="16" height="16" fill="#e8e8e8"><path d="M4 13A3.500 3.500 0 0 1 3.500 6 5 5 0 0 1 12 6 3.500 3.500 0 0 1 13 13Z" /></svg>
          </Overflow>
          <svg width="16" height="16" fill="none" stroke="#fff" strokeWidth="1.300"><path d="M1 6Q8 0 15 6M3 8.500Q8 4 13 8.500M5 11Q8 8.500 11 11" /><circle cx="8" cy="13" r="1" fill="#fff" /></svg>
          <svg width="16" height="16" fill="none" stroke="#fff" strokeWidth="1.200"><path d="M1 6H4L7.500 3V13L4 10H1ZM9.500 6Q11 8 9.500 10M11.500 4.500Q14 8 11.500 11.500M13.500 3Q16.500 8 13.500 13" /></svg>
          <svg width="16" height="16" fill="none" stroke="#fff" strokeWidth="1.200"><path d="M5 5H13.500V12H3.500V8M14 7H15.500V10H14" /><path d="M6 7H12V10H6Z" fill="#fff" /><path d="M1 3.500H5V6Q3 9 1 6ZM2 1.500V3.500M4 1.500V3.500" /></svg>
          <Clock>09:48<br />01/09/2022</Clock>
          <NoticeCount>1</NoticeCount>
        </Tray>
      </Taskbar>
    </Shell>
  );
}
